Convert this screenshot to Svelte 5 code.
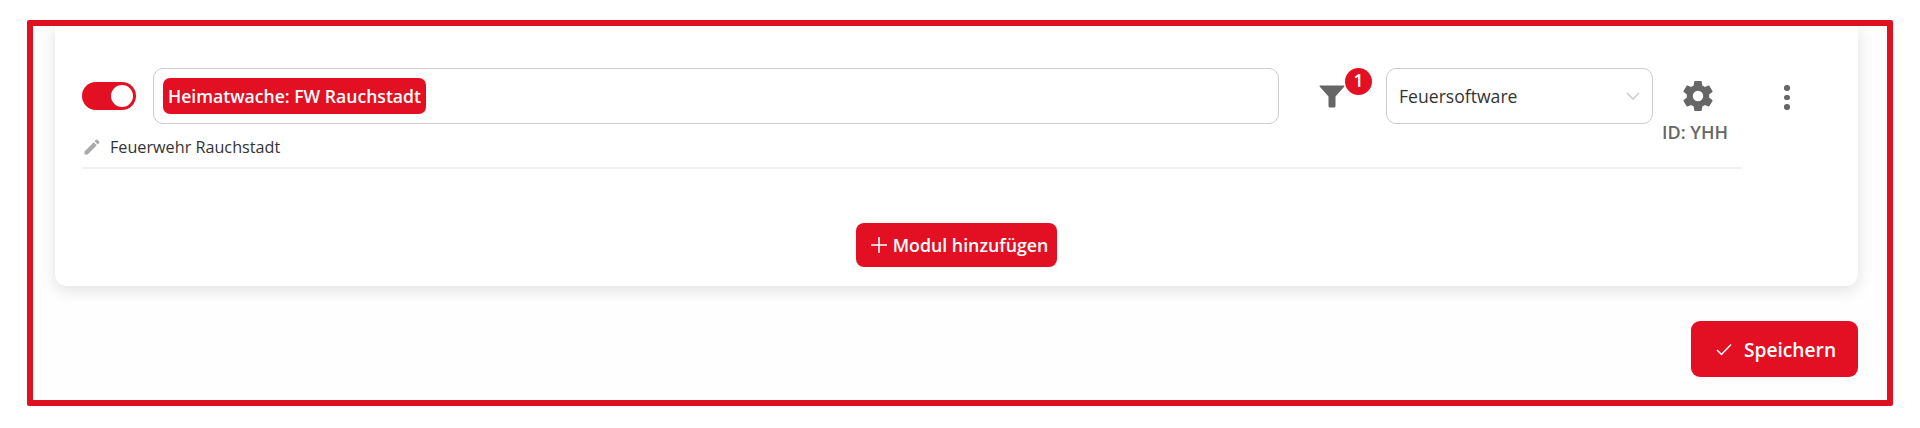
<script>
  let enabled = $state(true);
</script>

<div class="frame">
  <section class="card">
    <div class="module">
      <button class="toggle" class:on={enabled} aria-label="Modul aktiv" onclick={() => (enabled = !enabled)}>
        <span class="knob"></span>
      </button>

      <div class="tag-input">
        <span class="tag">Heimatwache: FW Rauchstadt</span>
      </div>

      <div class="filter">
        <svg width="26" height="26" viewBox="0 0 26 26" fill="#666">
          <path d="M1 2.5h24a.6.6 0 0 1 .4 1L16.500 13.500V23a1.500 1.500 0 0 1-1.500 1.500h-4A1.500 1.500 0 0 1 9.500 23v-9.500L.6 3.500a.6.6 0 0 1 .4-1z"/>
        </svg>
        <span class="count">1</span>
      </div>

      <div class="select">
        <span>Feuersoftware</span>
        <svg width="14" height="8" viewBox="0 0 14 8" fill="none" stroke="#ccc" stroke-width="1.600">
          <path d="M1 1l6 6 6-6"/>
        </svg>
      </div>

      <div class="settings">
        <svg width="36" height="36" viewBox="0 0 24 24" fill="#666">
          <path d="M19.430 12.980c.04-.32.070-.64.070-.98s-.03-.66-.07-.98l2.110-1.650c.19-.15.240-.42.120-.64l-2-3.460c-.12-.22-.39-.30-.61-.22l-2.490 1c-.52-.40-1.080-.73-1.690-.98l-.38-2.650A.49.490 0 0 0 14 2h-4c-.25 0-.46.180-.49.420l-.38 2.650c-.61.250-1.170.59-1.690.98l-2.490-1c-.23-.09-.49 0-.61.220l-2 3.460c-.13.220-.07.490.12.640l2.110 1.650c-.04.320-.07.650-.07.980s.03.660.07.980l-2.110 1.650c-.19.150-.24.420-.12.640l2 3.460c.12.220.39.300.61.220l2.490-1c.52.400 1.080.730 1.690.980l.38 2.650c.03.240.24.420.49.420h4c.25 0 .46-.18.49-.42l.38-2.650c.61-.25 1.170-.59 1.690-.98l2.490 1c.23.090.49 0 .61-.22l2-3.460c.12-.22.070-.49-.12-.64l-2.110-1.650zM12 15.500a3.500 3.500 0 1 1 0-7 3.500 3.500 0 0 1 0 7z"/>
        </svg>
        <span class="id">ID: YHH</span>
      </div>

      <button class="more" aria-label="Mehr">
        <i></i><i></i><i></i>
      </button>
    </div>

    <div class="name">
      <svg width="20" height="20" viewBox="0 0 24 24" fill="#aaa">
        <path d="M3 17.250V21h3.750L17.810 9.940l-3.750-3.750L3 17.250zM20.710 7.040a1 1 0 0 0 0-1.410l-2.340-2.340a1 1 0 0 0-1.410 0l-1.830 1.830 3.750 3.750 1.830-1.830z"/>
      </svg>
      <span>Feuerwehr Rauchstadt</span>
    </div>

    <div class="add-row">
      <button class="btn add">
        <svg width="16" height="16" viewBox="0 0 16 16" stroke="#fff" stroke-width="1.600">
          <path d="M8 0v16M0 8h16"/>
        </svg>
        Modul hinzufügen
      </button>
    </div>
  </section>

  <div class="footer">
    <button class="btn save">
      <svg width="16" height="13" viewBox="0 0 16 13" fill="none" stroke="#fff" stroke-width="1.500">
        <path d="M1 7l4.500 4.500L15 1.500"/>
      </svg>
      Speichern
    </button>
  </div>
</div>

<style>
  :global(body) {
    background: #fff;
    font-family: "Open Sans", "Noto Sans", sans-serif;
  }
  .frame {
    box-sizing: border-box;
    width: 1866px;
    height: 386px;
    margin: 20px 0 0 27px;
    border: 6px solid #df101f;
    border-radius: 2px;
    overflow: hidden;
    background: #fefefe;
    padding-left: 22px;
    padding-right: 29px;
  }
  .card {
    background: #fff;
    border-radius: 0 0 12px 12px;
    box-shadow: 0 4px 16px rgba(0, 0, 0, 0.12);
    height: 260px;
    box-sizing: border-box;
    padding: 42px 0 0 27px;
  }
  .module {
    display: flex;
    align-items: flex-start;
    height: 56px;
  }
  .toggle {
    width: 54px;
    height: 28px;
    margin-top: 14px;
    padding: 0;
    border: none;
    border-radius: 14px;
    background: #bbb;
    display: flex;
    align-items: center;
    justify-content: flex-start;
    cursor: pointer;
  }
  .toggle.on {
    background: #e30f22;
    justify-content: flex-end;
  }
  .knob {
    width: 22px;
    height: 22px;
    margin: 0 3px;
    border-radius: 50%;
    background: #fff;
  }
  .tag-input {
    box-sizing: border-box;
    width: 1126px;
    height: 56px;
    margin-left: 17px;
    padding: 9px;
    border: 1.500px solid #ccc;
    border-radius: 10px;
  }
  .tag {
    display: inline-block;
    height: 36px;
    line-height: 36px;
    padding: 0 5px;
    border-radius: 7px;
    background: #e30f22;
    color: #fff;
    font-size: 17.600px;
    font-weight: 600;
  }
  .filter {
    position: relative;
    width: 26px;
    height: 26px;
    margin: 15px 0 0 40px;
  }
  .filter svg {
    display: block;
  }
  .count {
    position: absolute;
    left: 26px;
    top: -15px;
    width: 27px;
    height: 27px;
    border-radius: 50%;
    background: #e30f22;
    color: #fff;
    font-size: 17.600px;
    font-weight: 600;
    line-height: 25px;
    text-align: center;
  }
  .select {
    box-sizing: border-box;
    width: 267px;
    height: 56px;
    margin-left: 41px;
    padding: 0 12px;
    border: 1.500px solid #ccc;
    border-radius: 10px;
    display: flex;
    align-items: center;
    justify-content: space-between;
    color: #333;
    font-size: 17.600px;
  }
  .settings {
    width: 66px;
    margin-left: 9px;
    padding-top: 10px;
    display: flex;
    flex-direction: column;
    align-items: center;
    color: #666;
  }
  .settings svg {
    margin-left: 5px;
  }
  .id {
    margin-top: 6px;
    font-size: 18px;
    font-weight: 600;
    white-space: nowrap;
  }
  .more {
    display: flex;
    flex-direction: column;
    gap: 4px;
    margin: 17px 0 0 56px;
    padding: 0;
    border: none;
    background: none;
  }
  .more i {
    width: 5.500px;
    height: 5.500px;
    border-radius: 50%;
    background: #666;
  }
  .name {
    display: flex;
    align-items: center;
    gap: 8px;
    width: 1660px;
    height: 45px;
    border-bottom: 2px solid #f0f0f0;
    color: #333;
    font-size: 16.200px;
    box-sizing: border-box;
    padding-top: 2px;
  }
  .add-row {
    display: flex;
    justify-content: center;
    padding-top: 54px;
    width: 1749px;
  }
  .btn {
    display: inline-flex;
    align-items: center;
    justify-content: center;
    border: none;
    background: #e30f22;
    color: #fff;
    font-family: inherit;
    cursor: pointer;
  }
  .add {
    width: 201px;
    height: 44px;
    gap: 6px;
    padding: 0 0 0 6px;
    border-radius: 8px;
    font-size: 17.800px;
    font-weight: 600;
  }
  .footer {
    display: flex;
    justify-content: flex-end;
    padding-top: 35px;
  }
  .save {
    width: 167px;
    height: 56px;
    gap: 12px;
    padding: 0 0 0 3px;
    border-radius: 9px;
    font-size: 19.200px;
    font-weight: 600;
  }
</style>
